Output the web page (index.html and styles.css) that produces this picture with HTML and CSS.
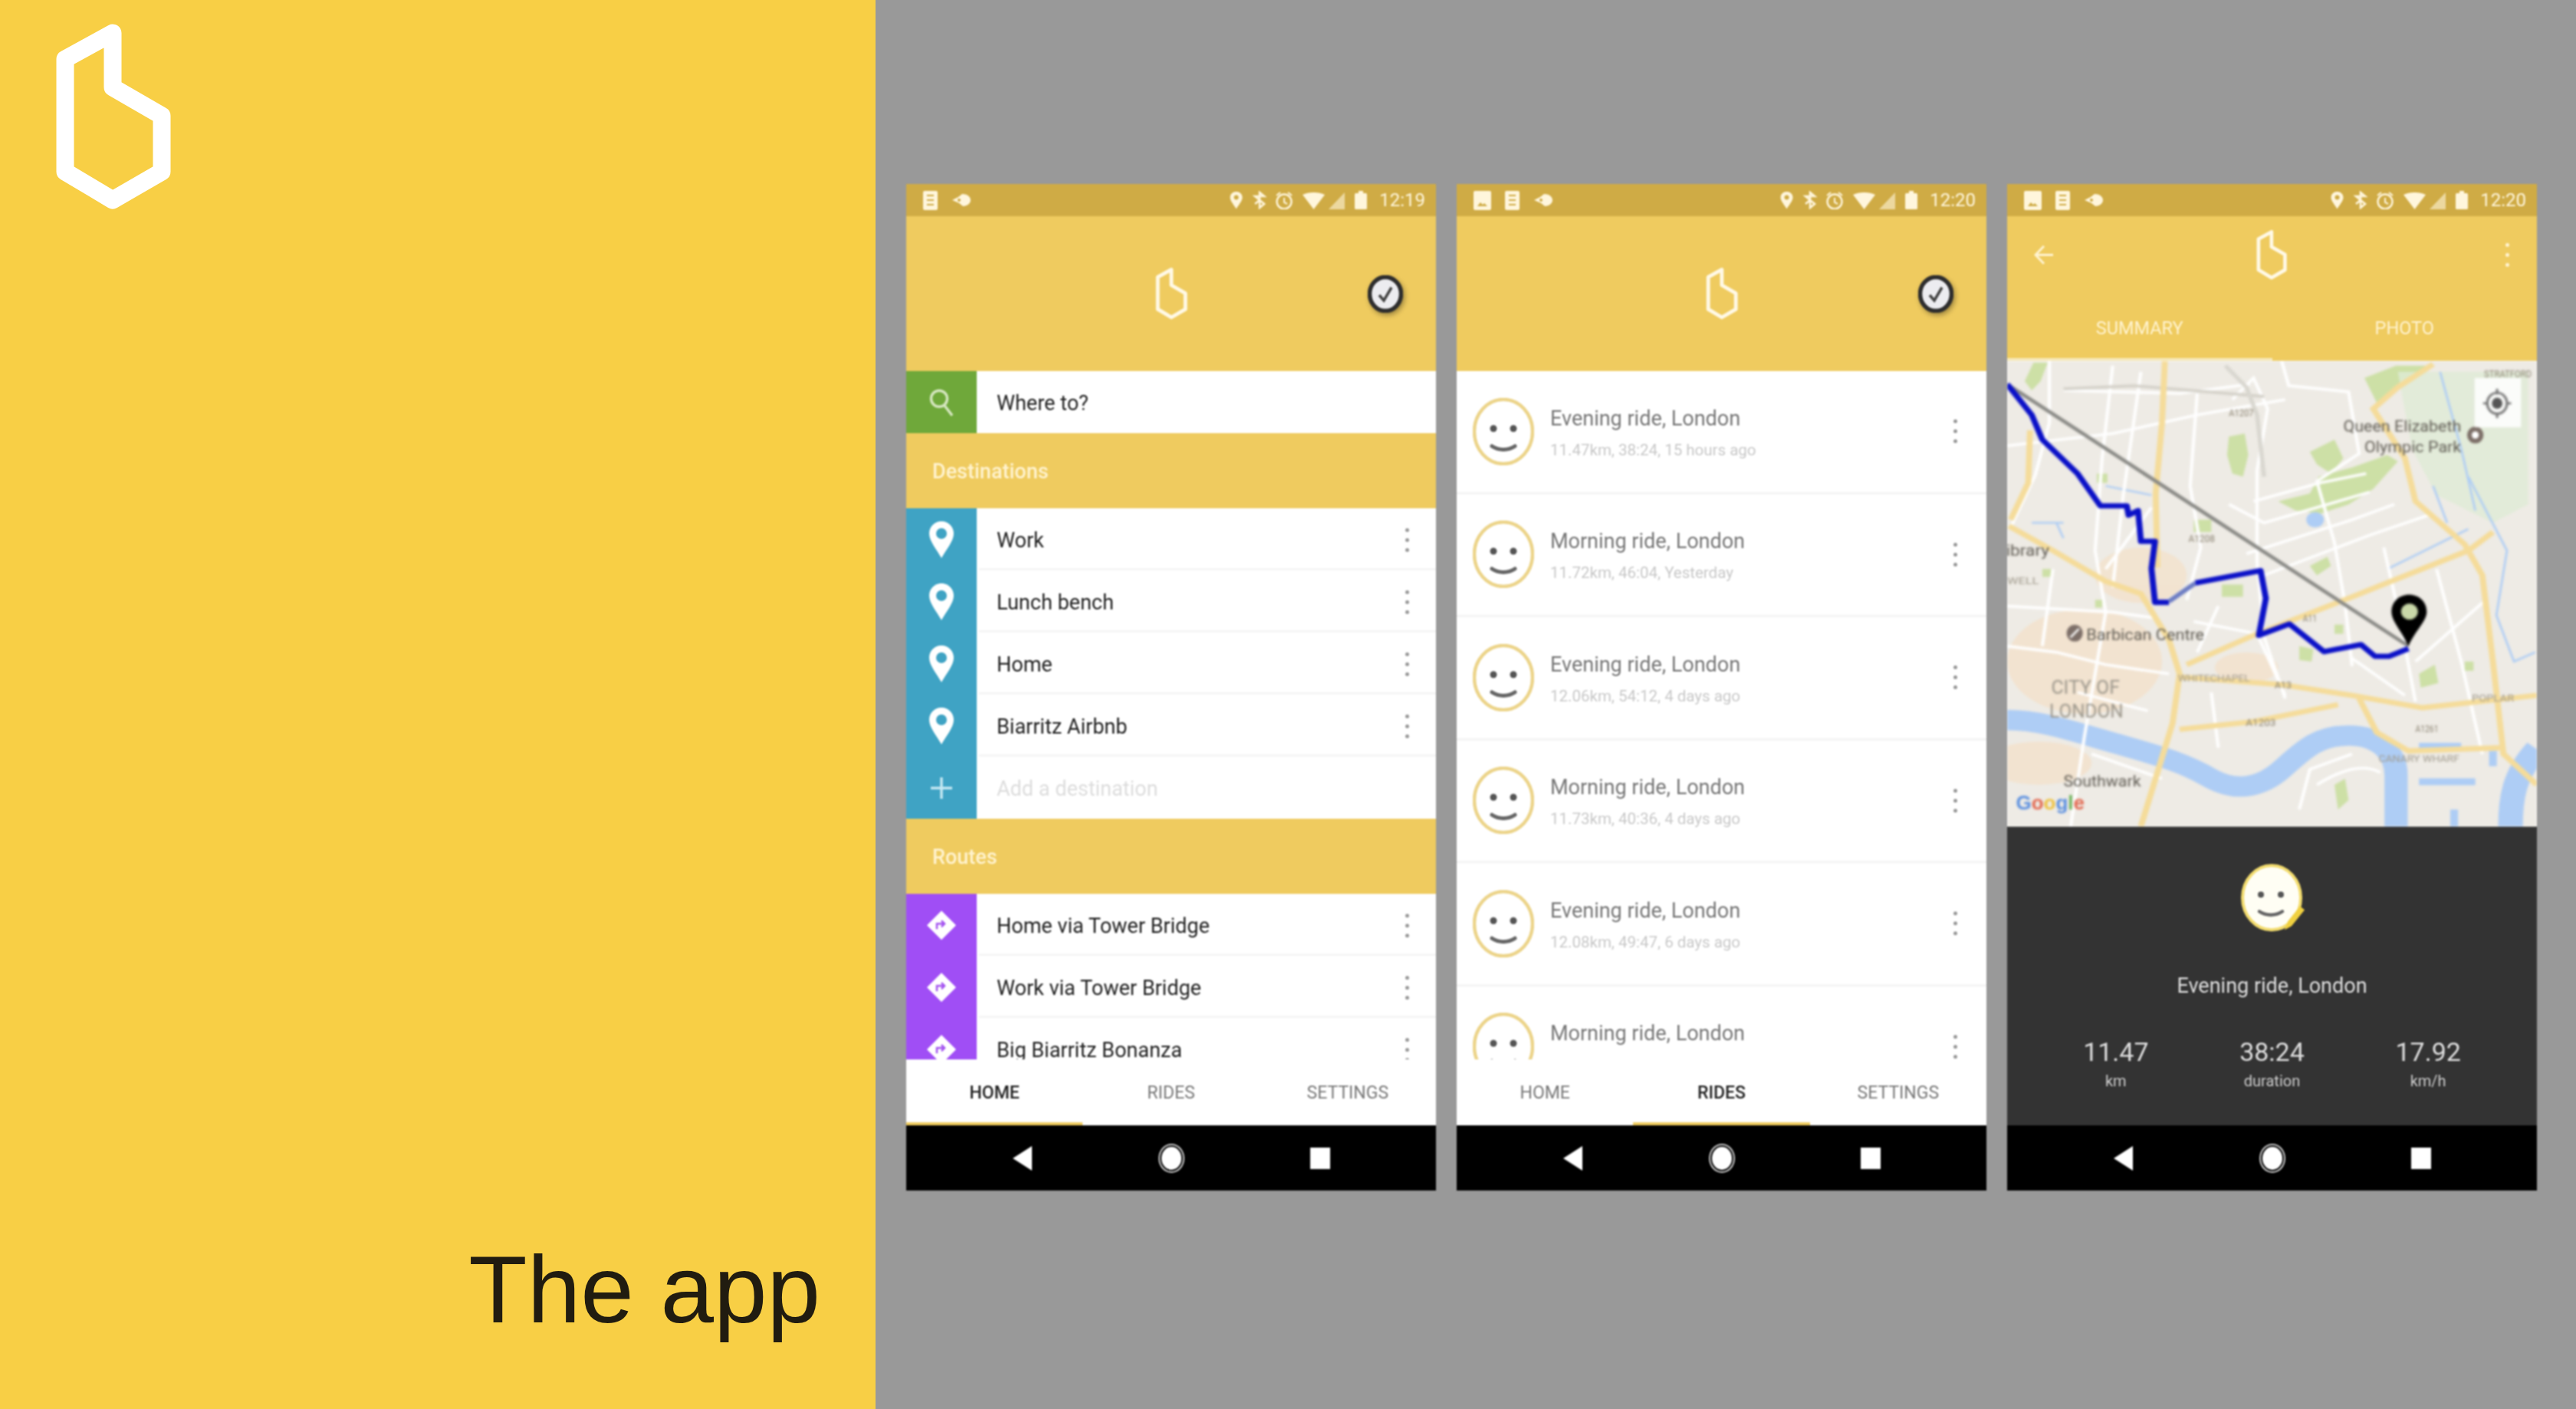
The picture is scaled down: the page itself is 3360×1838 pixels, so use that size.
FILE: index.html
```html
<!DOCTYPE html>
<html lang="en">
<head>
  <meta charset="UTF-8">
  <meta name="viewport" content="width=device-width, initial-scale=1.0">
  <title>The app</title>
  <link rel="stylesheet" href="styles.css">
</head>
<body>

  <!-- shared icons -->
  <svg class="defs" width="0" height="0">
    <symbol id="logo" viewBox="60 20 175 265">
      <polygon points="85,77 147,43 147,114 211,151 211,224 147,261 85,224" fill="none" stroke="currentColor" stroke-linejoin="round"/>
    </symbol>
    <symbol id="sim" viewBox="0 0 19 25">
      <rect width="19" height="25" rx="2" fill="#fff6dc"/>
      <path d="M5 6h9M5 12h9M5 18h9" stroke="#cfab45" stroke-width="2"/>
    </symbol>
    <symbol id="photo" viewBox="0 0 23 25">
      <rect width="23" height="25" rx="2" fill="#fff6dc"/>
      <path d="M5 20l4-5 3 3 2-2 4 4z" fill="#cfab45"/>
    </symbol>
    <symbol id="blob" viewBox="0 0 25 16">
      <path d="M1 8l8-4 5-4c7 0 11 4 11 8s-4 8-10 8l-5-4z" fill="#fff6dc"/>
      <circle cx="10" cy="8" r="2" fill="#cfab45"/>
    </symbol>
    <symbol id="status-right" viewBox="0 0 179 24">
      <path d="M8.500 1c4.500 0 8 3.200 8 7.500 0 4.500-5 10-8 15-3-5-8-10.500-8-15C.5 4.200 4 1 8.500 1z" fill="#fff6dc"/>
      <circle cx="8.500" cy="8.500" r="3" fill="#cfab45"/>
      <path d="M39 2v20l6-5-12-10 12-0-6-5zM33 17l6-5" fill="none" stroke="#fff6dc" stroke-width="2.600"/>
      <ellipse cx="71" cy="14" rx="9.500" ry="9.500" fill="none" stroke="#fff6dc" stroke-width="2.400"/>
      <path d="M71 9v6l4 2M61 6l5-4M81 6l-5-4" fill="none" stroke="#fff6dc" stroke-width="2"/>
      <path d="M95 5c8-4 21-4 29 0l-14.500 19z" fill="#fff6dc"/>
      <path d="M129 24l21-22v22z" fill="#fff6dc" opacity=".6"/>
      <rect x="163" y="3" width="16" height="21" rx="1.500" fill="#fff6dc"/>
      <rect x="168" y="0" width="6" height="3" fill="#fff6dc"/>
    </symbol>
    <symbol id="pin" viewBox="0 0 32 48">
      <path fill-rule="evenodd" d="M16 0c9 0 16 7 16 16 0 10-10 21-16 32C10 37 0 26 0 16 0 7 7 0 16 0zm0 9a7 7 0 1 0 0 14 7 7 0 0 0 0-14z" fill="#fff"/>
    </symbol>
    <symbol id="route" viewBox="0 0 40 40">
      <path d="M20 1l18 18c1 1 1 1 0 2L20 39 2 21c-1-1-1-1 0-2z" fill="#fff"/>
      <path d="M14 25v-7h9M20 14l4 4-4 4" fill="none" stroke="#a455f0" stroke-width="2.500"/>
    </symbol>
    <symbol id="face" viewBox="0 0 80 88">
      <ellipse cx="40" cy="44" rx="38" ry="42" fill="#fff" stroke="#ecd48a" stroke-width="4.500"/>
      <circle cx="27" cy="40" r="4.500" fill="#555"/>
      <circle cx="53" cy="40" r="4.500" fill="#555"/>
      <path d="M25 63c9 6 21 6 30 0" fill="none" stroke="#666" stroke-width="5" stroke-linecap="round"/>
    </symbol>
    <symbol id="check" viewBox="0 0 46 49">
      <ellipse cx="23" cy="24.500" rx="20.500" ry="22" fill="#ececf0" stroke="#2e2e2e" stroke-width="5.500"/>
      <path d="M15 26l6 7 10-17" fill="none" stroke="#444" stroke-width="3.500"/>
    </symbol>
  </svg>

  <div class="slide">
    <div class="panel">
      <svg class="panel-logo"><use href="#logo"/></svg>
      <h1 class="panel-title">The app</h1>
    </div>

    <div class="stage">

      <!-- home -->
      <div class="phone">
        <div class="status">
          <div class="status-left">
            <svg class="ic-sim"><use href="#sim"/></svg>
            <svg class="ic-blob"><use href="#blob"/></svg>
          </div>
          <div class="status-right">
            <svg class="ic-status"><use href="#status-right"/></svg>
            <span class="time">12:19</span>
          </div>
        </div>
        <div class="appbar">
          <svg class="appbar-logo"><use href="#logo"/></svg>
          <svg class="appbar-check"><use href="#check"/></svg>
        </div>
        <div class="content">
          <div class="row">
            <div class="row-icon green">
              <svg class="ic-search" viewBox="0 0 32 36"><circle cx="13" cy="13" r="10.500" fill="none" stroke="#d5e6bf" stroke-width="3.500"/><path d="M20 22l10 13" stroke="#d5e6bf" stroke-width="3.500"/></svg>
            </div>
            <div class="row-text plain">Where to?</div>
          </div>
          <div class="section">Destinations</div>
          <div class="row">
            <div class="row-icon blue"><svg class="ic-pin"><use href="#pin"/></svg></div>
            <div class="row-text">Work<span class="dots"></span></div>
          </div>
          <div class="row">
            <div class="row-icon blue"><svg class="ic-pin"><use href="#pin"/></svg></div>
            <div class="row-text">Lunch bench<span class="dots"></span></div>
          </div>
          <div class="row">
            <div class="row-icon blue"><svg class="ic-pin"><use href="#pin"/></svg></div>
            <div class="row-text">Home<span class="dots"></span></div>
          </div>
          <div class="row">
            <div class="row-icon blue"><svg class="ic-pin"><use href="#pin"/></svg></div>
            <div class="row-text">Biarritz Airbnb<span class="dots"></span></div>
          </div>
          <div class="row">
            <div class="row-icon blue">
              <svg class="ic-plus" viewBox="0 0 28 28"><path d="M14 0v28M0 14h28" stroke="#c4e8f2" stroke-width="3.500"/></svg>
            </div>
            <div class="row-text plain faint">Add a destination</div>
          </div>
          <div class="section">Routes</div>
          <div class="row">
            <div class="row-icon purple"><svg class="ic-route"><use href="#route"/></svg></div>
            <div class="row-text">Home via Tower Bridge<span class="dots"></span></div>
          </div>
          <div class="row">
            <div class="row-icon purple"><svg class="ic-route"><use href="#route"/></svg></div>
            <div class="row-text">Work via Tower Bridge<span class="dots"></span></div>
          </div>
          <div class="row">
            <div class="row-icon purple"><svg class="ic-route"><use href="#route"/></svg></div>
            <div class="row-text">Big Biarritz Bonanza<span class="dots"></span></div>
          </div>
        </div>
        <div class="tabs">
          <div class="tab active">HOME</div>
          <div class="tab">RIDES</div>
          <div class="tab">SETTINGS</div>
        </div>
        <div class="navbar">
          <span class="nav-back"></span>
          <span class="nav-home"></span>
          <span class="nav-square"></span>
        </div>
      </div>

      <!-- rides -->
      <div class="phone">
        <div class="status">
          <div class="status-left">
            <svg class="ic-photo"><use href="#photo"/></svg>
            <svg class="ic-sim"><use href="#sim"/></svg>
            <svg class="ic-blob"><use href="#blob"/></svg>
          </div>
          <div class="status-right">
            <svg class="ic-status"><use href="#status-right"/></svg>
            <span class="time">12:20</span>
          </div>
        </div>
        <div class="appbar">
          <svg class="appbar-logo"><use href="#logo"/></svg>
          <svg class="appbar-check"><use href="#check"/></svg>
        </div>
        <div class="content">
          <div class="ride">
            <svg class="ic-face"><use href="#face"/></svg>
            <div class="ride-text"><div class="ride-title">Evening ride, London</div><div class="ride-sub">11.47km, 38:24, 15 hours ago</div></div>
            <span class="dots"></span>
          </div>
          <div class="ride">
            <svg class="ic-face"><use href="#face"/></svg>
            <div class="ride-text"><div class="ride-title">Morning ride, London</div><div class="ride-sub">11.72km, 46:04, Yesterday</div></div>
            <span class="dots"></span>
          </div>
          <div class="ride">
            <svg class="ic-face"><use href="#face"/></svg>
            <div class="ride-text"><div class="ride-title">Evening ride, London</div><div class="ride-sub">12.06km, 54:12, 4 days ago</div></div>
            <span class="dots"></span>
          </div>
          <div class="ride">
            <svg class="ic-face"><use href="#face"/></svg>
            <div class="ride-text"><div class="ride-title">Morning ride, London</div><div class="ride-sub">11.73km, 40:36, 4 days ago</div></div>
            <span class="dots"></span>
          </div>
          <div class="ride">
            <svg class="ic-face"><use href="#face"/></svg>
            <div class="ride-text"><div class="ride-title">Evening ride, London</div><div class="ride-sub">12.08km, 49:47, 6 days ago</div></div>
            <span class="dots"></span>
          </div>
          <div class="ride">
            <svg class="ic-face"><use href="#face"/></svg>
            <div class="ride-text"><div class="ride-title">Morning ride, London</div><div class="ride-sub">&nbsp;</div></div>
            <span class="dots"></span>
          </div>
        </div>
        <div class="tabs">
          <div class="tab">HOME</div>
          <div class="tab active">RIDES</div>
          <div class="tab">SETTINGS</div>
        </div>
        <div class="navbar">
          <span class="nav-back"></span>
          <span class="nav-home"></span>
          <span class="nav-square"></span>
        </div>
      </div>

      <!-- ride detail -->
      <div class="phone">
        <div class="status">
          <div class="status-left">
            <svg class="ic-photo"><use href="#photo"/></svg>
            <svg class="ic-sim"><use href="#sim"/></svg>
            <svg class="ic-blob"><use href="#blob"/></svg>
          </div>
          <div class="status-right">
            <svg class="ic-status"><use href="#status-right"/></svg>
            <span class="time">12:20</span>
          </div>
        </div>
        <div class="detailbar">
          <div class="detail-top">
            <svg class="ic-back" viewBox="0 0 25 27"><path d="M25 13.500H3M13 2L2 13.500 13 25" fill="none" stroke="#fff3cf" stroke-width="3"/></svg>
            <svg class="detail-logo"><use href="#logo"/></svg>
            <span class="dots light"></span>
          </div>
          <div class="detail-tabs">
            <div class="detail-tab active">SUMMARY</div>
            <div class="detail-tab">PHOTO</div>
          </div>
        </div>

        <svg class="map" viewBox="20 25 1505 1510" preserveAspectRatio="none">
          <rect x="20" y="25" width="1505" height="1510" fill="#eeebe5"/>
          <!-- built-up tint -->
          <g fill="#f3e2cc" opacity=".8">
            <ellipse cx="240" cy="1000" rx="220" ry="170"/>
            <ellipse cx="400" cy="720" rx="130" ry="90"/>
            <ellipse cx="110" cy="1330" rx="150" ry="70"/>
            <ellipse cx="700" cy="1020" rx="90" ry="50"/>
          </g>
          <!-- parks -->
          <g fill="#cde0a6">
            <path d="M790 480l90-25 25-55 95-30 100-40 30 20-70 90-70 50-80 30-70-10z"/>
            <path d="M880 320l70-40 25 60-35 50-40-30z"/>
            <path d="M1035 80l90-40h95l-80 50-70 70z"/>
            <path d="M650 270l45-10 10 70-15 70-30-10-15-60z"/>
            <path d="M880 690l50-30 10 30-40 30zM550 540h50v40h-50zM630 750h60v40h-60zM850 950l40 10-5 40-35-5zM1190 1040l45-30 10 60-50 15zM1320 1000h25v30h-25zM275 390h30v30h-30zM120 700h25v25h-25zM270 800h20v25h-20zM950 880h25v30h-25z"/>
            <path d="M95 30h40l-20 60-25 30-20-30z"/>
            <path d="M950 1400l30-20 10 70-30 30z"/>
          </g>
          <path d="M1130 60h370v430l-100 60-160-90-70-150z" fill="#dfebd6" opacity=".8"/>
          <!-- water -->
          <g fill="none" stroke="#aecdf5">
            <path stroke-width="66" d="M20 1190c90 0 170 30 290 70s200 60 290 120c80 50 150 20 200-30 60-60 100-110 190-110 90 0 135 60 135 130v200"/>
            <path stroke-width="70" d="M1450 1535c0-90 10-170 75-250"/>
            <path stroke-width="22" d="M1190 1275h120M1190 1390h160M1400 1290v50M1290 1480v60"/>
            <path stroke-width="6" d="M1250 60l60 250 40 200M1230 430l40 120M1330 400l110 240-30 210 50 150 60-30M1100 700l230-130M90 550h90M160 550l20 50M300 430l130 30"/>
          </g>
          <circle cx="895" cy="540" r="25" fill="#aecdf5"/>
          <!-- minor roads -->
          <g fill="none" stroke="#fff" stroke-width="9">
            <path d="M140 25v200l-40 170-70 170"/>
            <path d="M320 40l-30 300-20 300 30 200-60 400-40 300"/>
            <path d="M560 130l-20 300 30 200-40 170"/>
            <path d="M660 150l60-70 40 100-30 200 0 300 20 240 60 200"/>
            <path d="M800 25l20 80 170 20 30 200-120 90 50 200 30 200 20 200"/>
            <path d="M180 120l330 10 200-30"/>
            <path d="M20 300l300-40 240-60 250-50"/>
            <path d="M720 480l190-60 130-30M650 490l100 60 300-100"/>
            <path d="M700 650l300-110 120-50M750 720l300-130 180-70"/>
            <path d="M1090 630l40 200 50 300M1240 700l70 300 60 300"/>
            <path d="M20 950l140 20 140 40 180 30M20 820l300 20 130 20M550 870l180 40 80 200"/>
            <path d="M1000 1300l-120 50-30 130M900 1400c70-50 130-70 180-40M1180 1000l200-200M1000 990l150 120"/>
            <path d="M220 1100l200 60M260 1300l200 80M600 1100l20 180M400 60l-50 400 -30 300M430 500l-130 200M150 700l-30 250M620 820l-60 150"/>
          </g>
          <path d="M180 115l200-10 370 35" fill="none" stroke="#d5d2ca" stroke-width="10"/>
          <path d="M640 40l60 70 30 90 20 200" fill="none" stroke="#d9d7d0" stroke-width="12"/>
          <!-- main roads -->
          <g fill="none" stroke="#f5dc9a" stroke-width="17">
            <path d="M468 25l-8 200-18 230 5 240"/>
            <path d="M530 1010l200-100 270-120 330-150 70-60"/>
            <path d="M25 560l125 80 150 100 100 40 80 150 30 110-20 160-90 335"/>
            <path d="M510 1050l290 25 200 35 200 40 325-40"/>
            <path d="M510 1220l210-25 240-55"/>
            <path d="M1230 35l-100 75-70 70 90 160 30 140 140 140 50 100 30 280 30 300 95 100"/>
            <path d="M85 250l-5 170-50 120"/>
            <path d="M1020 1120l50 110 90 60 260-10"/>
          </g>
          <g class="map-label road">
            <text x="650" y="205" textLength="70" lengthAdjust="spacingAndGlyphs">A1207</text>
            <text x="535" y="612" textLength="75" lengthAdjust="spacingAndGlyphs">A1208</text>
            <text x="860" y="870" textLength="40" lengthAdjust="spacingAndGlyphs">A11</text>
            <text x="780" y="1088" textLength="48" lengthAdjust="spacingAndGlyphs">A13</text>
            <text x="698" y="1210" textLength="85" lengthAdjust="spacingAndGlyphs">A1203</text>
            <text x="1180" y="1230" textLength="65" lengthAdjust="spacingAndGlyphs">A1261</text>
            <text x="1375" y="78" textLength="135" lengthAdjust="spacingAndGlyphs">STRATFORD</text>
          </g>
          <g class="map-label area">
            <text x="505" y="1065" textLength="205" lengthAdjust="spacingAndGlyphs">WHITECHAPEL</text>
            <text x="1340" y="1130" textLength="120" lengthAdjust="spacingAndGlyphs">POPLAR</text>
            <text x="1075" y="1325" textLength="230" lengthAdjust="spacingAndGlyphs">CANARY WHARF</text>
            <text x="20" y="748" textLength="90" lengthAdjust="spacingAndGlyphs">WELL</text>
          </g>
          <!-- route -->
          <path d="M20 100L1160 950" stroke="#8a8a86" stroke-width="11" fill="none"/>
          <path d="M20 100l70 100 30 80 100 110 65 105h75l5 30 27-15 8 100h40l-10 88 10 110h40" stroke="#0a10c8" stroke-width="17" fill="none" stroke-linejoin="round"/>
          <path d="M480 805l75-60" stroke="#6d7dc4" stroke-width="14" fill="none"/>
          <path d="M555 745l185-40 15 90-20 120 87-37 98 90 105-23 40 38h40l55-25" stroke="#0a10c8" stroke-width="17" fill="none" stroke-linejoin="round"/>
          <path d="M1160 950c-22-55-48-80-48-112 0-32 22-55 50-55s50 23 50 55c0 32-30 57-52 112z" fill="#000"/>
          <ellipse cx="1163" cy="838" rx="24" ry="26" fill="#c9d8a8"/>
          <!-- place names -->
          <g class="map-label place">
            <text x="975" y="255" textLength="335" lengthAdjust="spacingAndGlyphs">Queen Elizabeth</text>
            <text x="1035" y="320" textLength="275" lengthAdjust="spacingAndGlyphs">Olympic Park</text>
            <text x="-10" y="658" textLength="150" lengthAdjust="spacingAndGlyphs">Library</text>
            <text x="245" y="930" textLength="335" lengthAdjust="spacingAndGlyphs">Barbican Centre</text>
            <text x="180" y="1405" textLength="220" lengthAdjust="spacingAndGlyphs">Southwark</text>
          </g>
          <g class="map-label city">
            <text x="145" y="1105" textLength="195" lengthAdjust="spacingAndGlyphs">CITY OF</text>
            <text x="140" y="1182" textLength="210" lengthAdjust="spacingAndGlyphs">LONDON</text>
          </g>
          <ellipse cx="212" cy="908" rx="23" ry="27" fill="#7d6f68"/>
          <path d="M200 922l24-28" stroke="#fff" stroke-width="6"/>
          <ellipse cx="1350" cy="265" rx="23" ry="27" fill="#7d6f68"/>
          <ellipse cx="1350" cy="265" rx="10" ry="12" fill="#fff"/>
          <text class="map-google" x="45" y="1480" textLength="195" lengthAdjust="spacingAndGlyphs"><tspan fill="#5a8fe0">G</tspan><tspan fill="#e2674f">o</tspan><tspan fill="#eec23e">o</tspan><tspan fill="#5a8fe0">g</tspan><tspan fill="#6cb35a">l</tspan><tspan fill="#e2674f">e</tspan></text>
          <!-- locate button -->
          <rect x="1348" y="80" width="132" height="160" fill="#fff" opacity=".85"/>
          <ellipse cx="1412" cy="162" rx="28" ry="34" fill="none" stroke="#777" stroke-width="7"/>
          <ellipse cx="1412" cy="162" rx="15" ry="18" fill="#555"/>
          <path d="M1412 115v18M1412 192v18M1372 162h14M1438 162h14" stroke="#777" stroke-width="7"/>
        </svg>

        <div class="summary">
          <svg class="ic-smile" viewBox="0 0 84 90">
            <ellipse cx="41" cy="44" rx="38" ry="42" fill="#fffef4" stroke="#f3dc6e" stroke-width="4"/>
            <circle cx="27" cy="40" r="4" fill="#555"/>
            <circle cx="53" cy="40" r="4" fill="#555"/>
            <path d="M25 62c9 6 21 6 30 0" fill="none" stroke="#666" stroke-width="4.500" stroke-linecap="round"/>
            <path d="M58 86l4-11 16-20 6 5-17 21z" fill="#f0d040"/>
          </svg>
          <div class="summary-title">Evening ride, London</div>
          <div class="stats">
            <div class="stat"><div class="stat-value">11.47</div><div class="stat-label">km</div></div>
            <div class="stat"><div class="stat-value">38:24</div><div class="stat-label">duration</div></div>
            <div class="stat"><div class="stat-value">17.92</div><div class="stat-label">km/h</div></div>
          </div>
        </div>
        <div class="navbar">
          <span class="nav-back"></span>
          <span class="nav-home"></span>
          <span class="nav-square"></span>
        </div>
      </div>

    </div>
  </div>

</body>
</html>
```

FILE: styles.css
```css
body {
  margin: 0;
  font-family: Roboto, "Liberation Sans", sans-serif;
}

.defs {
  position: absolute;
}

.slide {
  display: flex;
  height: 1838px;
  overflow: hidden;
}

/* left panel */
.panel {
  width: 1142px;
  background-color: #f8cf45;
  display: flex;
  flex-direction: column;
  justify-content: space-between;
  align-items: flex-start;
}

.panel-logo {
  width: 175px;
  height: 265px;
  margin: 20px 0 0 60px;
  color: #fff;
  stroke-width: 23;
}

.panel-title {
  align-self: flex-end;
  margin: 0 72px 94px 0;
  font-family: "Liberation Sans", Arial, sans-serif;
  font-size: 125px;
  font-weight: 400;
  line-height: 124px;
  color: #211c10;
}

/* phones */
.stage {
  flex: 1;
  background-color: #999;
  display: flex;
  align-items: flex-start;
  gap: 27px;
  padding: 240px 0 0 40px;
}

.phone {
  width: 691px;
  height: 1313px;
  display: flex;
  flex-direction: column;
  overflow: hidden;
  background-color: #fff;
  filter: blur(1px);
}

.status {
  height: 42px;
  flex: none;
  background-color: #cfab45;
  display: flex;
  justify-content: space-between;
  align-items: center;
  padding: 0 14px 0 22px;
}

.status-left, .status-right {
  display: flex;
  align-items: center;
}

.status-left {
  gap: 18px;
}

.status-right {
  gap: 16px;
}

.ic-sim { width: 19px; height: 25px; }
.ic-photo { width: 23px; height: 25px; }
.ic-blob { width: 25px; height: 16px; }
.ic-status { width: 179px; height: 24px; }

.time {
  font-size: 24px;
  color: #fff6dc;
}

.appbar {
  height: 202px;
  flex: none;
  background-color: #efcb5f;
  display: grid;
  grid-template-columns: 1fr auto 1fr;
  align-items: center;
  justify-items: center;
}

.appbar-logo {
  grid-column: 2;
  width: 50px;
  height: 76px;
  color: #fff9e6;
  stroke-width: 17;
}

.appbar-check {
  justify-self: end;
  width: 46px;
  height: 49px;
  margin-right: 43px;
  filter: drop-shadow(2px 3px 3px rgba(0, 0, 0, .35));
}

.content {
  flex: 1;
  min-height: 0;
  overflow: hidden;
}

.row {
  display: flex;
  height: 81px;
}

.row-icon {
  width: 92px;
  flex: none;
  display: flex;
  align-items: center;
  justify-content: center;
}

.green { background-color: #6fa83a; }
.blue { background-color: #3fa3c4; }
.purple { background-color: #a04ef5; }

.ic-search { width: 32px; height: 36px; }
.ic-pin { width: 32px; height: 48px; }
.ic-plus { width: 28px; height: 28px; }
.ic-route { width: 40px; height: 40px; }

.row-text {
  flex: 1;
  display: flex;
  align-items: center;
  justify-content: space-between;
  padding: 5px 35px 0 23px;
  margin-left: 3px;
  font-size: 27px;
  color: #222;
  border-bottom: 3px solid #f5f5f5;
}

.row-text.plain {
  padding-top: 3px;
  border-bottom: none;
}

.row-text.faint {
  color: #ddd;
}

.section {
  height: 98px;
  box-sizing: border-box;
  padding: 2px 34px 0;
  display: flex;
  align-items: center;
  background-color: #efcb5f;
  color: #fff3cf;
  font-size: 27px;
  font-weight: 500;
}

.dots {
  width: 5px;
  height: 5px;
  flex: none;
  border-radius: 50%;
  background-color: #999;
  box-shadow: 0 -13px #999, 0 13px #999;
}

.dots.light {
  background-color: #fff3cf;
  box-shadow: 0 -13px #fff3cf, 0 13px #fff3cf;
}

/* ride list */
.ride {
  height: 160.5px;
  box-sizing: border-box;
  display: flex;
  align-items: center;
  padding: 0 38px 0 21px;
  border-bottom: 3px solid #f4f4f4;
}

.ic-face {
  width: 80px;
  height: 88px;
  flex: none;
}

.ride-text {
  flex: 1;
  margin-left: 21px;
  padding-top: 3px;
}

.ride-title {
  font-size: 27px;
  line-height: 38px;
  color: #777;
}

.ride-sub {
  font-size: 20.500px;
  line-height: 30px;
  color: #c8c8c8;
  margin-top: 7px;
}

/* bottom tabs */
.tabs {
  height: 86px;
  flex: none;
  display: grid;
  grid-template-columns: repeat(3, 1fr);
  background-color: #fff;
}

.tab {
  box-sizing: border-box;
  padding-top: 30px;
  text-align: center;
  font-size: 23px;
  color: #777;
  border-bottom: 4px solid transparent;
}

.tab.active {
  color: #222;
  font-weight: 500;
  border-bottom-color: #efcb5f;
}

.navbar {
  height: 85px;
  flex: none;
  background-color: #000;
  display: grid;
  grid-template-columns: repeat(3, 194px);
  justify-content: center;
  justify-items: center;
  align-items: center;
}

.nav-back {
  width: 0;
  height: 0;
  border-style: solid;
  border-width: 16px 25px 16px 0;
  border-color: transparent #fff transparent transparent;
}

.nav-home {
  width: 26px;
  height: 30px;
  border-radius: 50%;
  background-color: #fff;
  box-shadow: 0 0 0 2px #000, 0 0 0 4px #ccc;
}

.nav-square {
  width: 26px;
  height: 28px;
  background-color: #fff;
}

/* ride detail */
.detailbar {
  height: 189px;
  flex: none;
  background-color: #efcb5f;
  display: flex;
  flex-direction: column;
}

.detail-top {
  height: 100px;
  display: grid;
  grid-template-columns: 1fr auto 1fr;
  align-items: center;
  padding: 0 36px 0 35px;
}

.ic-back {
  width: 25px;
  height: 27px;
}

.detail-top .dots {
  justify-self: end;
}

.detail-logo {
  width: 48px;
  height: 73px;
  color: #fff9e6;
  stroke-width: 17;
}

.detail-tabs {
  flex: 1;
  display: grid;
  grid-template-columns: 1fr 1fr;
}

.detail-tab {
  box-sizing: border-box;
  padding-top: 32px;
  text-align: center;
  font-size: 23.500px;
  color: #fff3cf;
  border-bottom: 4px solid transparent;
}

.detail-tab.active {
  border-bottom-color: #f7e9b8;
}

.map {
  display: block;
  width: 691px;
  height: 607px;
  flex: none;
  filter: blur(.8px);
}

.map-label text {
  font-family: Roboto, "Liberation Sans", sans-serif;
}

.map-label.road text {
  font-size: 30px;
  fill: #8b8372;
}

.map-label.area text {
  font-size: 30px;
  fill: #a09a8c;
}

.map-label.place text {
  font-size: 50px;
  fill: #5e5a52;
}

.map-label.city text {
  font-size: 62px;
  fill: #9a958a;
}

.map-google {
  font-family: "Liberation Sans", sans-serif;
  font-size: 62px;
  font-weight: 700;
}

.summary {
  flex: 1;
  min-height: 0;
  background-color: #333;
  display: flex;
  flex-direction: column;
  align-items: center;
  padding-top: 49px;
  box-sizing: border-box;
}

.ic-smile {
  width: 84px;
  height: 90px;
  flex: none;
}

.summary-title {
  margin-top: 51px;
  font-size: 27px;
  line-height: 36px;
  color: #ddd;
}

.stats {
  align-self: stretch;
  margin-top: 46px;
  padding: 0 40px;
  display: grid;
  grid-template-columns: repeat(3, 1fr);
  text-align: center;
}

.stat-value {
  font-size: 34px;
  line-height: 44px;
  color: #ddd;
}

.stat-label {
  font-size: 20px;
  line-height: 32px;
  color: #ccc;
}
```
